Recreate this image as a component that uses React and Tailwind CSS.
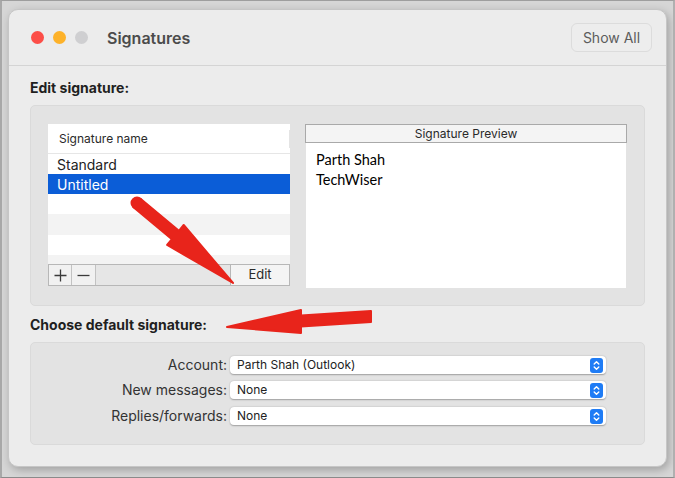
import React from "react";

function Stepper() {
  return (
    <div className="w-[13px] h-[15px] rounded-[3px] bg-[#1f7cf5] flex items-center justify-center">
      <svg width="7" height="11" viewBox="0 0 7 11" fill="none" stroke="white" strokeWidth="1.4" strokeLinecap="round" strokeLinejoin="round">
        <path d="M1.2 4 L3.5 1.7 L5.8 4" />
        <path d="M1.2 7 L3.5 9.3 L5.8 7" />
      </svg>
    </div>
  );
}

function SelectRow({ label, value }) {
  return (
    <div className="flex items-center">
      <div className="w-[199px] text-right text-[14px] text-[#333] pr-[3px] leading-none">{label}</div>
      <div className="w-[376px] h-[18px] bg-white rounded-[4px] shadow-[0_0.5px_1.5px_rgba(0,0,0,0.3)] flex items-center justify-between pl-[7px] pr-[3px]">
        <span className="text-[12px] text-[#222] leading-none">{value}</span>
        <Stepper />
      </div>
    </div>
  );
}

export default function App() {
  const font = { fontFamily: "Inter, 'Noto Sans', sans-serif" };
  return (
    <div className="relative w-[675px] h-[478px] overflow-hidden bg-[#d6d6d6] border-t border-l-2 border-b border-r-2 border-t-[#9e9e9e] border-l-[#a8a8a8] border-b-[#8a8a8a] border-r-[#b0b0b0]" style={font}>
      <div className="ml-[6px] mt-[8px] w-[659px] h-[458px] rounded-[10px] bg-[#ececec] border border-[#c6c6c6] shadow-[2px_3px_8px_rgba(0,0,0,0.25)] flex flex-col">
        {/* Title bar */}
        <div className="h-[56px] shrink-0 border-b border-[#d4d4d4] flex items-center pl-[22px] pr-[14px]">
          <div className="flex items-center gap-[9px]">
            <div className="w-[13px] h-[13px] rounded-full bg-[#fc4e48]" />
            <div className="w-[13px] h-[13px] rounded-full bg-[#fdb22a]" />
            <div className="w-[13px] h-[13px] rounded-full bg-[#cfcfd1]" />
          </div>
          <div className="ml-[19px] text-[16px] font-semibold text-[#4b4b4b]">Signatures</div>
          <div className="ml-auto w-[81px] h-[29px] rounded-[6px] border border-[#dcdcdc] bg-[#ededed] flex items-center justify-center text-[14px] text-[#5c5c5c]">
            Show All
          </div>
        </div>

        {/* Content */}
        <div className="px-[21px] flex flex-col">
          <div className="mt-[13px] h-[16px] flex items-center text-[14px] font-bold text-[#1f1f1f]">Edit signature:</div>

          <div className="mt-[10px] w-[615px] h-[201px] rounded-[5px] bg-[#e3e3e3] border border-[#dadada] flex pl-[17px] pt-[18px] gap-[15px]">
            {/* Table */}
            <div className="w-[242px] h-[162px] flex flex-col bg-white">
              <div className="h-[30px] shrink-0 flex items-center pl-[11px] border-b border-[#e6e6e6] text-[12px] text-[#2a2a2a] relative">
                Signature name
                <div className="absolute right-0 top-[6px] w-px h-[18px] bg-[#e4e4e4]" />
              </div>
              <div className="h-[20px] flex items-center pl-[9px] text-[14px] text-[#222]">Standard</div>
              <div className="h-[20px] flex items-center pl-[9px] text-[14px] text-white bg-[#0b5dd7]">Untitled</div>
              <div className="h-[20px] bg-white" />
              <div className="h-[21px] bg-[#f3f3f3]" />
              <div className="h-[20px] bg-white" />
              <div className="flex-1 bg-[#f3f3f3]" />
              <div className="h-[22px] shrink-0 flex bg-[#e6e6e6] border border-[#b7b7b7]">
                <div className="w-[23px] flex items-center justify-center border-r border-[#c2c2c2] bg-[#f1f1f1]">
                  <svg width="13" height="13" viewBox="0 0 13 13" stroke="#3a3a3a" strokeWidth="1.3"><path d="M6.5 0.5 V12.5 M0.5 6.5 H12.5" /></svg>
                </div>
                <div className="w-[24px] flex items-center justify-center border-r border-[#c2c2c2] bg-[#f1f1f1]">
                  <svg width="13" height="13" viewBox="0 0 13 13" stroke="#3a3a3a" strokeWidth="1.3"><path d="M0.5 6.5 H12.5" /></svg>
                </div>
                <div className="flex-1" />
                <div className="w-[59px] flex items-center justify-center border-l border-[#b7b7b7] bg-[#f4f4f4] text-[13px] text-[#2a2a2a]">Edit</div>
              </div>
            </div>

            {/* Preview */}
            <div className="w-[322px] h-[164px] flex flex-col">
              <div className="h-[19px] shrink-0 flex items-center justify-center bg-[#f4f4f4] border border-[#a9a9a9] text-[12px] text-[#2a2a2a]">
                Signature Preview
              </div>
              <div className="flex-1 bg-white mx-px pt-[7px] pl-[10px] text-[14.5px] leading-[20px] text-black" style={{ fontFamily: "Lato, 'Open Sans', sans-serif" }}>
                <div>Parth Shah</div>
                <div>TechWiser</div>
              </div>
            </div>
          </div>

          <div className="mt-[10px] h-[16px] flex items-center text-[14px] font-bold text-[#1f1f1f]">Choose default signature:</div>

          <div className="mt-[10px] w-[615px] h-[103px] rounded-[5px] bg-[#e3e3e3] border border-[#dadada] flex flex-col pt-[13px]">
            <SelectRow label="Account:" value="Parth Shah (Outlook)" />
            <div className="h-[7px]" />
            <SelectRow label="New messages:" value="None" />
            <div className="h-[8px]" />
            <SelectRow label="Replies/forwards:" value="None" />
          </div>
        </div>
      </div>

      {/* Red annotation arrows */}
      <svg className="absolute left-0 top-0 pointer-events-none" width="675" height="478" viewBox="-2 -1 675 478">
        <g fill="#e8241b" stroke="#e8241b" strokeWidth="2" strokeLinejoin="round">
          <polygon points="136.5,196.8 174.9,228.8 179.7,223 229,281 163.1,243 167.9,237.2 129.5,205.2" />
          <circle cx="133" cy="201" r="5.5" />
          <polygon points="367,309 367,320 297,324.5 297,331 223,325 297,308 297,313.5" />
        </g>
      </svg>
    </div>
  );
}
